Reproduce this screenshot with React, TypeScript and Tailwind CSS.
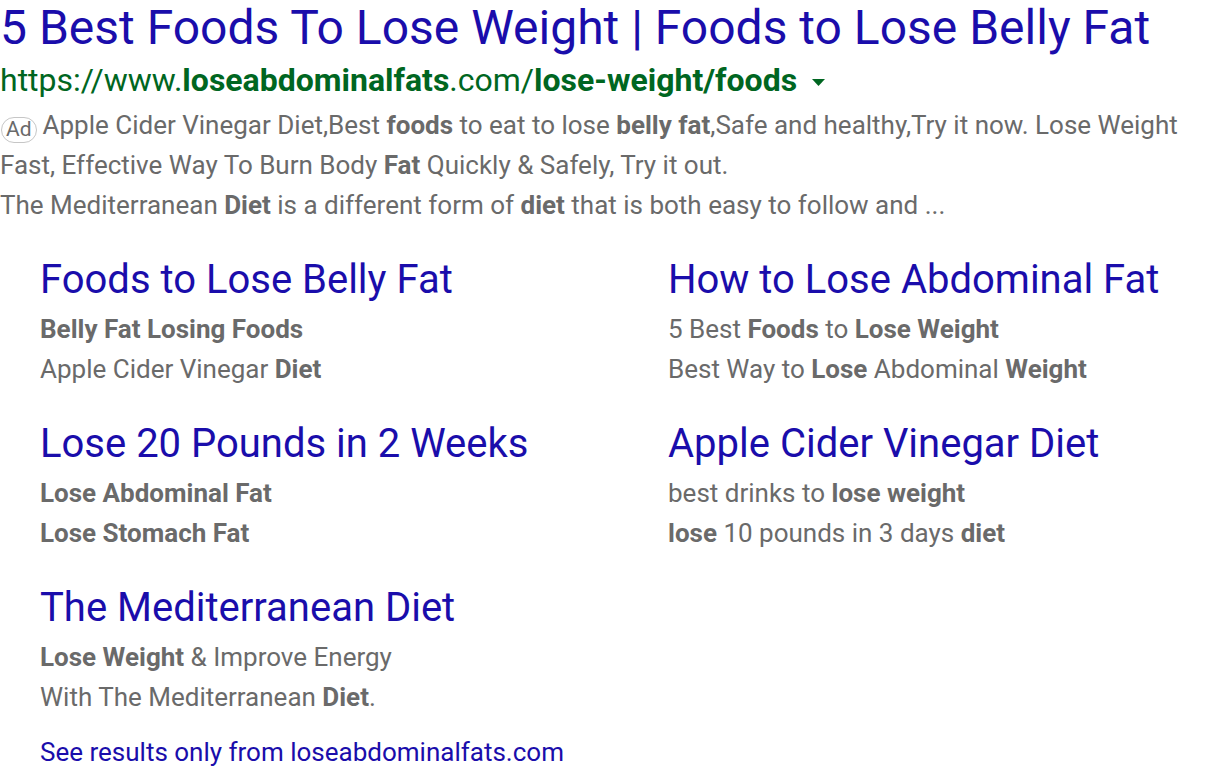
const sitelinks = [
  {
    title: "Foods to Lose Belly Fat",
    lines: [
      [<b key="a">Belly Fat Losing Foods</b>],
      ["Apple Cider Vinegar ", <b key="b">Diet</b>],
    ],
  },
  {
    title: "How to Lose Abdominal Fat",
    lines: [
      ["5 Best ", <b key="a">Foods</b>, " to ", <b key="b">Lose Weight</b>],
      ["Best Way to ", <b key="c">Lose</b>, " Abdominal ", <b key="d">Weight</b>],
    ],
  },
  {
    title: "Lose 20 Pounds in 2 Weeks",
    lines: [[<b key="a">Lose Abdominal Fat</b>], [<b key="b">Lose Stomach Fat</b>]],
  },
  {
    title: "Apple Cider Vinegar Diet",
    lines: [
      ["best drinks to ", <b key="a">lose weight</b>],
      [<b key="b">lose</b>, " 10 pounds in 3 days ", <b key="c">diet</b>],
    ],
  },
  {
    title: "The Mediterranean Diet",
    lines: [
      [<b key="a">Lose Weight</b>, " & Improve Energy"],
      ["With The Mediterranean ", <b key="b">Diet</b>, "."],
    ],
  },
];

export default function App() {
  return (
    <div
      className="w-[1216px] h-[776px] bg-white overflow-hidden"
      style={{ fontFamily: "Roboto, 'Liberation Sans', sans-serif" }}
    >
      <h1 className="text-[48px] leading-[56px] text-[#1a0dab] whitespace-nowrap">
        5 Best Foods To Lose Weight | Foods to Lose Belly Fat
      </h1>
      <div className="mt-[4px] flex items-center text-[32px] leading-[40px] text-[#006621] whitespace-nowrap">
        <span>
          https://www.<b>loseabdominalfats</b>.com/<b>lose-weight/foods</b>
        </span>
        <svg className="ml-[15px] mt-[4px] w-[13px] h-[7px]" viewBox="0 0 13 7">
          <path d="M0 0h13L6.5 7z" fill="#006621" />
        </svg>
      </div>
      <div className="mt-[5px] text-[26px] leading-[40px] text-[#6a6a6a] [&_b]:font-bold">
        <p className="whitespace-nowrap">
          <span className="inline-flex items-center justify-center h-[26px] px-[4px] ml-[1px] mr-[6px] border border-[#c6c6c6] rounded-[13px] text-[21px] leading-none align-[-2px]">
            Ad
          </span>
          Apple Cider Vinegar Diet,Best <b>foods</b> to eat to lose <b>belly fat</b>,Safe and healthy,Try it now. Lose Weight
        </p>
        <p>
          Fast, Effective Way To Burn Body <b>Fat</b> Quickly &amp; Safely, Try it out.
        </p>
        <p>
          The Mediterranean <b>Diet</b> is a different form of <b>diet</b> that is both easy to follow and ...
        </p>
      </div>
      <div className="mt-[31px] ml-[40px] grid grid-cols-[628px_1fr] gap-y-[31px]">
        {sitelinks.map((s) => (
          <div key={s.title}>
            <div className="text-[40px] leading-[48px] text-[#1a0dab] whitespace-nowrap">
              {s.title}
            </div>
            <div className="mt-[5px] text-[26px] leading-[40px] text-[#6a6a6a] [&_b]:font-bold">
              {s.lines.map((l, i) => (
                <p key={i} className="whitespace-nowrap">
                  {l}
                </p>
              ))}
            </div>
          </div>
        ))}
      </div>
      <div className="mt-[15px] ml-[40px] text-[26px] leading-[40px] text-[#1a0dab]">
        See results only from loseabdominalfats.com
      </div>
    </div>
  );
}
